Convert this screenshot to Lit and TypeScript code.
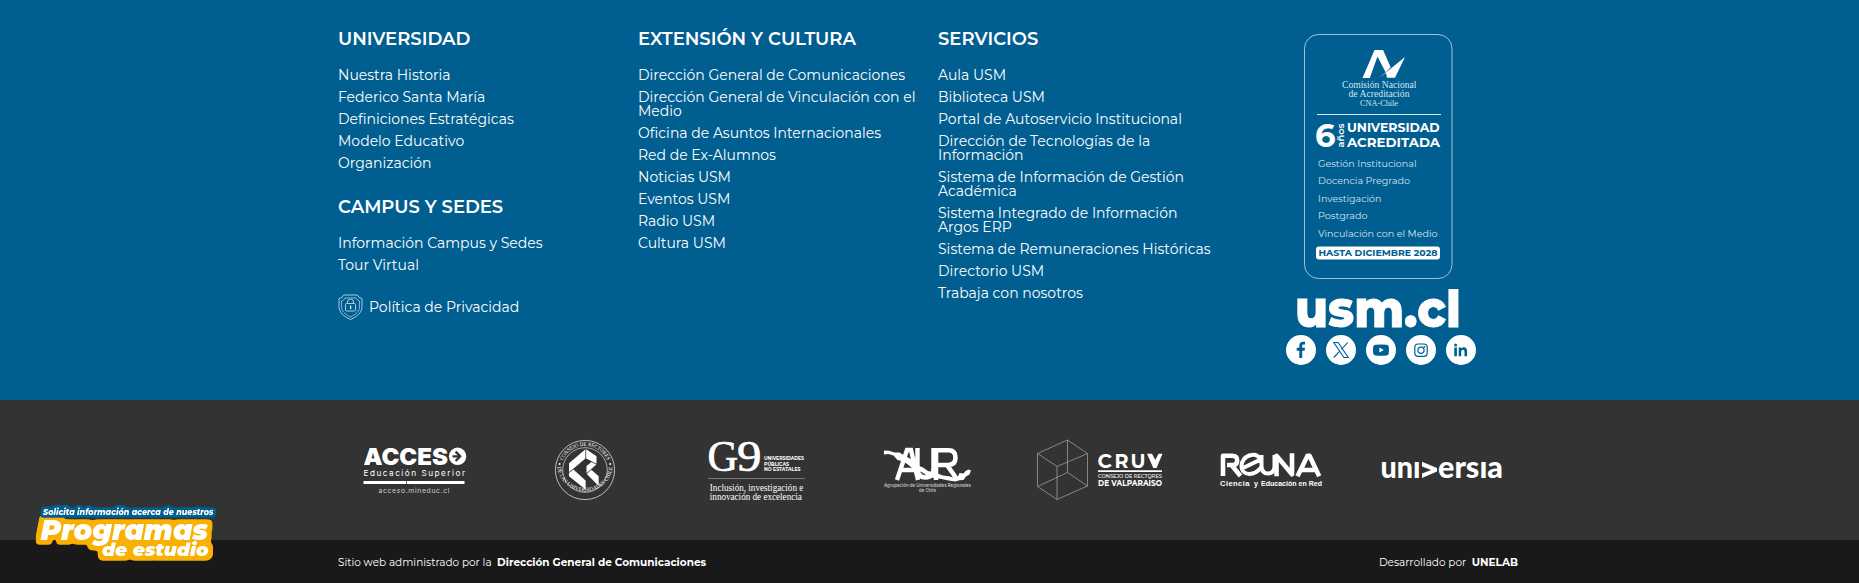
import { LitElement, html, svg, css } from "lit";
import { customElement, property } from "lit/decorators.js";

const UNIVERSIDAD = [
  "Nuestra Historia",
  "Federico Santa María",
  "Definiciones Estratégicas",
  "Modelo Educativo",
  "Organización",
];
const CAMPUS = ["Información Campus y Sedes", "Tour Virtual"];
const EXTENSION = [
  "Dirección General de Comunicaciones",
  "Dirección General de Vinculación con el Medio",
  "Oficina de Asuntos Internacionales",
  "Red de Ex-Alumnos",
  "Noticias USM",
  "Eventos USM",
  "Radio USM",
  "Cultura USM",
];
const SERVICIOS = [
  "Aula USM",
  "Biblioteca USM",
  "Portal de Autoservicio Institucional",
  "Dirección de Tecnologías de la Información",
  "Sistema de Información de Gestión Académica",
  "Sistema Integrado de Información Argos ERP",
  "Sistema de Remuneraciones Históricas",
  "Directorio USM",
  "Trabaja con nosotros",
];

/** Heading with its list of links. */
@customElement("link-group")
class LinkGroup extends LitElement {
  @property() heading = "";
  @property({ attribute: false }) items: string[] = [];

  static styles = css`
    :host { display: block; }
    .heading { font-size: 18px; line-height: 20px; font-weight: 600; margin: 0 0 19px; }
    ul { list-style: none; margin: 0; padding: 0; display: flex; flex-direction: column; gap: 8px; width: 280px; }
    a { display: block; font-size: 14px; line-height: 14px; font-weight: 400; }
  `;

  render() {
    return html`
      <h3 class="heading">${this.heading}</h3>
      <ul>
        ${this.items.map((item) => html`<li><a>${item}</a></li>`)}
      </ul>`;
  }
}

/** SVG text helper: x, baseline, width, size. */
const t = (s: string, x: number, y: number, w: number, size: number, cls = "", adjust = "spacingAndGlyphs") =>
  svg`<text class=${cls} x=${x} y=${y} font-size=${size} textLength=${w} lengthAdjust=${adjust}>${s}</text>`;

const acceso = svg`
  ${t("ACCES", 363.5, 464.8, 84.5, 23.5, "inter-black")}
  <circle cx="457.6" cy="456.3" r="8.7"/>
  <path d="M455.6 451.6l4.6 4.7-4.6 4.7M452.5 456.3h6.5" fill="none" stroke="#333" stroke-width="2.3"/>
  ${t("Educación Superior", 363.5, 476, 101.5, 8.2, "inter", "spacing")}
  <path d="M363.5 481h42.6v3h-42.6zM406.8 481h57.7v3h-57.7z"/>
  ${t("acceso.mineduc.cl", 378.5, 493, 71, 6.8, "inter dim", "spacing")}`;

const seal = svg`
  <circle cx="585" cy="470" r="29.6" fill="none" stroke="#ddd" stroke-width=".8"/>
  <circle cx="585" cy="470" r="22.3" fill="none" stroke="#ddd" stroke-width=".7"/>
  <defs>
    <path id="arc-top" d="M562.8 460.6A24.1 24.1 0 0 1 607.2 460.6"/>
    <path id="arc-bottom" d="M557.3 467A27.9 27.9 0 0 0 612.7 467"/>
  </defs>
  <text class="serif" font-size="5.6"><textPath href="#arc-top" textLength="56" lengthAdjust="spacingAndGlyphs">CONSEJO DE RECTORES</textPath></text>
  <text class="serif" font-size="5.6"><textPath href="#arc-bottom" textLength="91" lengthAdjust="spacingAndGlyphs">DE LAS UNIVERSIDADES CHILENAS</textPath></text>
  <circle cx="559.6" cy="464" r="1"/><circle cx="610.2" cy="464" r="1"/>
  <path d="M585.4 449.2L569 463.2v8.9l4.9-3.8 11.5-9.7z"/>
  <path d="M586.2 449.2l10.3 7v7.6l-10.3-5.4z"/>
  <path d="M568.9 472.9l4.5-3.5 12.2 11.2v9L569 476.3z"/>
  <path d="M596.3 464.6l-9.8 8.6v-7.3l5-4z"/>
  <path d="M586.8 474l4.5-4.2 7.4 6.4v9.9z"/>`;

const g9 = svg`
  ${t("G", 707.5, 470.8, 30.5, 44, "serif thick")}
  ${t("9", 737, 470.8, 24.5, 45, "serif thick")}
  ${t("UNIVERSIDADES", 764, 459.7, 40, 5.6, "bold")}
  ${t("PÚBLICAS", 764, 465.5, 25, 5.6, "bold")}
  ${t("NO ESTATALES", 764, 471.2, 36.5, 5.6, "bold")}
  <path d="M708 478h97v.9h-97z" fill="#777"/>
  ${t("Inclusión, investigación e", 709.8, 491, 93.5, 9.4, "serif")}
  ${t("innovación de excelencia", 709.8, 500, 92, 9.4, "serif")}`;

const aur = svg`
  <path fill="none" stroke="#fff" stroke-width="4.4" d="M897 480L907 450h4L918 480M901 470h13M917.5 448v20q0 9.500 8 9.500t8-9.500V448"/>
  <path fill="none" stroke="#fff" stroke-width="4.6" d="M936 480V450.300h12.500q7 0 7 7.200t-7 7.500H938M947 465l10.500 15"/>
  <path d="M884 450.500l5 .3 5.500 1.700 5 0 5.500 3.500 6 3 6 6 6 2.500 5 3.500 8 2 7 2.500 6 .8 6 1.700 3-1.500 1.500-3.500 4 .5 2-2.500 3-1.500 2.500 1-1.500 4-3.500 2-2.500 3.500-4 .3-4 1.200-7-1-8-1.800-6-.5-7-2.200-6-4-7-2-6-5-5-3.500-6-1.500-4-4.500-5-1.500-4.500.5z"/>
  ${t("Agrupación de Universidades Regionales", 884, 486.5, 87, 4.6, "inter medium dim")}
  ${t("de Chile", 919, 492.2, 17, 4.6, "inter medium dim")}`;

const cruv = svg`
  <path fill="none" stroke="#aaa" stroke-width=".7" d="M1067.5 440l-30 13.500v33l19.500 13 30.500-13.500v-32.500zM1037.500 453.500l19.500 13 30.500-13M1057 466.500v33M1067.500 440v32.500l-30 14M1067.500 472.500l20 13.500"/>
  ${t("C", 1097.6, 467.8, 14.5, 19.5, "bold")}
  ${t("R", 1114.5, 467.8, 14, 19.5, "bold")}
  ${t("U", 1130.5, 467.8, 15, 19.5, "bold")}
  <path d="M1147 453.800h5l3.300 6.200 3.200-6.200h4l-6 14.200h-3.200z"/>
  <path d="M1098 470.200h64v1.800h-64z"/>
  ${t("CONSEJO DE RECTORES", 1098, 478, 64, 5.6, "medium")}
  ${t("DE VALPARAÍSO", 1098, 486.3, 64, 8.2, "bold")}`;

const reuna = svg`
  <path fill="none" stroke="#fff" stroke-width="4.6" stroke-linejoin="round" d="M1223 476v-20.200h9q5.200 0 5.200 4.600t-5.200 4.600h-5M1231.500 465l9 11"/>
  <path fill="none" stroke="#fff" stroke-width="4" d="M1242 468.500l18.500-9q-3-5.500-9-4.500c-7 1-10 6.500-10 11 0 5 3.500 8 8 8 5.500 0 8.500-2.500 12-7V455v10.500q0 8 6.500 8t6.500-8V455"/>
  <path fill="none" stroke="#fff" stroke-width="4.600" stroke-linejoin="round" d="M1276.500 476.300v-20.500l15.500 18.500v-21M1297.500 476.300l10-20.500h2l9.700 20.500M1301.500 470h15"/>
  ${t("Ciencia", 1220, 485.6, 29.5, 7.6, "arial", "spacing")}
  ${t("y", 1254, 485.6, 4, 7.6, "arial")}
  ${t("Educación en Red", 1261, 485.6, 61, 7.6, "arial")}`;

const universia = svg`
  ${t("unı", 1380.5, 477.5, 40, 30.5, "round")}
  <path d="M1422 461.800l15 6.200v3.600l-15 6.400v-4.600l9.200-3.500-9.200-3.500z"/>
  ${t("ersıa", 1438, 477.5, 65, 30.5, "round")}`;

const LOGOS = [acceso, seal, g9, aur, cruv, reuna, universia];

const facebook = svg`<path d="M13.300 23v-7.200h-2.600v-3h2.600v-2c0-2.700 1.500-4 3.700-4 1 0 1.800.1 2.100.2v2.500h-1.500c-1.100 0-1.400.6-1.400 1.400v1.900h2.800l-.4 3h-2.400V23z"/>`;
const xLogo = svg`<path fill="none" stroke="#005e90" stroke-width="1.1" d="M7.800 7.500h4.300l10.100 15h-4.300zM21.700 7.500l-6.300 6.800M13.800 16.100L7.800 22.500"/>`;
const youtube = svg`<path fill-rule="evenodd" d="M9.500 9.700Q15 9.200 20.500 9.700q2.200.2 2.300 2.300.3 3.100 0 6.200-.2 2-2.300 2.300-5.500.5-11 0-2.200-.2-2.400-2.300-.3-3.100 0-6.200.2-2.100 2.400-2.300zM13.400 12.600v5l4.300-2.500z"/>`;
const instagram = svg`<g fill="none" stroke="#005e90" stroke-width="1.2"><rect x="8.8" y="9" width="12.4" height="12.4" rx="3.4"/><circle cx="15" cy="15.2" r="3.1"/></g><circle cx="18.4" cy="11.8" r=".9"/>`;
const linkedin = svg`<path d="M8.300 12.500h2.600v8.700H8.300zM12.700 12.500h2.500v1.200c.5-.8 1.400-1.400 2.600-1.400 2.600 0 3.300 1.700 3.300 4.100v4.800h-2.600v-4.200c0-1.200-.2-2.300-1.500-2.300s-1.800 1-1.800 2.300v4.200h-2.500z"/><circle cx="9.6" cy="9.9" r="1.5"/>`;

@customElement("app-root")
class AppRoot extends LitElement {
  static styles = css`
    :host { display: block; height: 583px; overflow: hidden; position: relative; color: #fff; font-family: Montserrat, Inter, "Open Sans", sans-serif; }
    svg { display: block; fill: #fff; }
    .main { height: 400px; box-sizing: border-box; background: #005e90; padding-top: 29px; }
    .columns { width: 1183px; margin: 0 auto; display: grid; grid-template-columns: 300px 300px 300px 283px; }
    .stack { display: flex; flex-direction: column; gap: 27px; }
    .policy { display: flex; align-items: center; gap: 6px; margin-top: -5px; font-size: 14px; line-height: 14px; }
    .side { padding: 5px 0 0 48px; display: flex; flex-direction: column; align-items: flex-start; }
    .badge { margin-left: 17px; }
    .wordmark { overflow: visible; stroke: #fff; stroke-width: 0.8px; }
    .social { display: flex; gap: 10px; }
    .social a { width: 30px; height: 30px; border-radius: 50%; background: #fff; }
    .social svg { fill: #005e90; }
    .partners { height: 140px; background: #333; }
    .logos { width: 1197px; height: 140px; margin: 0 auto; display: grid; grid-template-columns: repeat(7, 171px); }
    .bottom { height: 43px; background: #191919; }
    .credits { width: 1183px; height: 43px; box-sizing: border-box; padding-top: 2px; margin: 0 auto; display: flex; justify-content: space-between; align-items: center; font-size: 10.5px; line-height: 14px; }
    .credits div { display: flex; gap: 5.5px; }
    .credits b { font-weight: 700; }
    .credits .right { padding-right: 3px; }
    .programs { position: absolute; left: 20px; top: 490px; font-style: italic; }
    .black { font-weight: 900; }
    .extra { font-weight: 800; }
    .bold { font-weight: 700; }
    .semi { font-weight: 600; }
    .medium { font-weight: 500; }
    .dim { fill: #ccc; }
    .soft { fill: #d5e4ee; }
    .serif { font-family: "Liberation Serif", serif; }
    .thick { stroke: #fff; stroke-width: 0.7px; }
    .cna { font-family: "Liberation Serif", serif; fill: #d5e4ee; }
    .inter { font-family: Inter, sans-serif; }
    .inter-black { font-family: Inter, sans-serif; font-weight: 900; }
    .arial { font-family: "Liberation Sans", sans-serif; font-weight: 700; }
    .round { font-family: Lato, sans-serif; font-weight: 900; }
    .blue { fill: #005e90; font-weight: 700; }
  `;

  private badge() {
    return html`<svg class="badge" width="150" height="246" viewBox="1303 34 150 246">
      <rect x="1304.5" y="34.5" width="147.5" height="244" rx="14" fill="none" stroke="#9fc3d8"/>
      <path d="M1362.500 78l12-28h8.600l7.600 17.300-5 5.200-8.200-16.100-7.700 21.600z"/>
      <path d="M1378.500 77.800l9-6.500 17.500-14.300-10 20.800h-8l-1-4.800z"/>
      ${t("Comisión Nacional", 1342, 88, 74.5, 10.8, "cna")}
      ${t("de Acreditación", 1348.5, 97, 61, 10.8, "cna")}
      ${t("CNA-Chile", 1360, 105.5, 38, 9, "cna")}
      <path class="soft" d="M1317 114h124v1h-124z"/>
      ${t("6", 1315, 147, 20.5, 33, "bold")}
      <g transform="rotate(-90 1343.5 147.5)">${t("años", 1343.5, 147.5, 24, 9.5, "semi")}</g>
      ${t("UNIVERSIDAD", 1347, 132, 92.5, 13.2, "bold")}
      ${t("ACREDITADA", 1347, 147, 93, 13.2, "bold")}
      ${t("Gestión Institucional", 1318, 166.5, 98.5, 9.5, "soft")}
      ${t("Docencia Pregrado", 1318, 184, 92, 9.5, "soft")}
      ${t("Investigación", 1318, 201.5, 63.5, 9.5, "soft")}
      ${t("Postgrado", 1318, 219, 49.5, 9.5, "soft")}
      ${t("Vinculación con el Medio", 1318, 236.5, 119.5, 9.5, "soft")}
      <rect x="1316" y="246.5" width="124" height="13" rx="3"/>
      ${t("HASTA DICIEMBRE 2028", 1318.5, 256.2, 119, 9.5, "blue")}
    </svg>`;
  }

  private programs() {
    return html`<svg class="programs" width="220" height="90" viewBox="20 490 220 90">
      <defs>
        <filter id="gold" filterUnits="userSpaceOnUse" x="20" y="490" width="220" height="90" color-interpolation-filters="sRGB">
          <feMorphology in="SourceAlpha" operator="dilate" radius="4"/>
          <feGaussianBlur stdDeviation="1.6"/>
          <feComponentTransfer result="shape"><feFuncA type="linear" slope="5" intercept="-1.1"/></feComponentTransfer>
          <feFlood flood-color="#f9b000"/>
          <feComposite operator="in" in2="shape" result="halo"/>
          <feMerge><feMergeNode in="halo"/><feMergeNode in="SourceGraphic"/></feMerge>
        </filter>
        <filter id="blue" filterUnits="userSpaceOnUse" x="20" y="490" width="220" height="90" color-interpolation-filters="sRGB">
          <feMorphology in="SourceAlpha" operator="dilate" radius="2"/>
          <feGaussianBlur stdDeviation=".8"/>
          <feComponentTransfer result="shape"><feFuncA type="linear" slope="4" intercept="-.6"/></feComponentTransfer>
          <feFlood flood-color="#005e90"/>
          <feComposite operator="in" in2="shape" result="halo"/>
          <feMerge><feMergeNode in="halo"/><feMergeNode in="SourceGraphic"/></feMerge>
        </filter>
      </defs>
      <g filter="url(#gold)">
        ${t("Programas", 40.5, 539.5, 167.5, 28, "black")}
        ${t("de estudio", 102, 555.8, 106.5, 18.5, "black")}
      </g>
      <g filter="url(#blue)">${t("Solicita información acerca de nuestros", 43, 515.3, 170.5, 8, "extra")}</g>
    </svg>`;
  }

  render() {
    return html`
      <footer>
        <section class="main">
          <div class="columns">
            <div class="stack">
              <link-group heading="UNIVERSIDAD" .items=${UNIVERSIDAD}></link-group>
              <link-group heading="CAMPUS Y SEDES" .items=${CAMPUS}></link-group>
              <div class="policy">
                <svg width="25" height="26" viewBox="338 293.5 25 26">
                  <g fill="none" stroke="#a9cbe0" stroke-width="1">
                    <path d="M343.500 294.500h14l1.500 2.500 3 1v8c0 6-4.500 10-11.500 13-7-3-11.500-7-11.500-13v-8l3-1z"/>
                    <path d="M345 297.500h11l1.500 2 2 1v5.500c0 4.500-3 7.500-9 10.500-6-3-9-6-9-10.500v-5.500l2-1z" stroke-width=".8"/>
                    <rect x="345.5" y="303" width="10" height="7.5" rx="1"/>
                    <path d="M347.500 303v-1.500a3 3 0 0 1 6 0v1.500"/>
                  </g>
                  <path d="M350 305h1.200v3.500H350z"/>
                </svg>
                <span>Política de Privacidad</span>
              </div>
            </div>
            <link-group heading="EXTENSIÓN Y CULTURA" .items=${EXTENSION}></link-group>
            <link-group heading="SERVICIOS" .items=${SERVICIOS}></link-group>
            <div class="side">
              ${this.badge()}
              <svg class="wordmark" width="190" height="55" viewBox="1286 280 190 55">${t("usm.cl", 1295, 327.3, 166, 50, "extra")}</svg>
              <nav class="social">
                ${[facebook, xLogo, youtube, instagram, linkedin].map(
                  (i) => html`<a><svg width="30" height="30" viewBox="0 0 30 30">${i}</svg></a>`
                )}
              </nav>
            </div>
          </div>
        </section>
        <section class="partners">
          <div class="logos">
            ${LOGOS.map((l, i) => html`<svg width="171" height="140" viewBox="${331 + i * 171} 400 171 140">${l}</svg>`)}
          </div>
        </section>
        <section class="bottom">
          <div class="credits">
            <div><span>Sitio web administrado por la</span><b>Dirección General de Comunicaciones</b></div>
            <div class="right"><span>Desarrollado por</span><b>UNELAB</b></div>
          </div>
        </section>
      </footer>
      ${this.programs()}
    `;
  }
}
